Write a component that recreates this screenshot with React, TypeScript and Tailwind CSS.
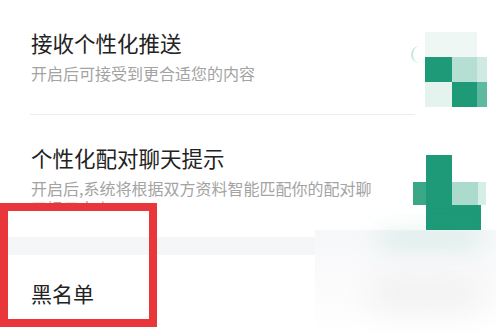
import React from "react";

const cjk = { fontFamily: '"Noto Sans CJK SC", "Noto Sans", sans-serif' };

const G = "#1f9a78";

// Pixel mosaic that hides the toggle switch in the screenshot.
function SwitchMosaic1() {
  return (
    <div className="flex items-start">
      <div className="mt-[14px] mr-[4px] w-[10px] h-[17px] rounded-l-full border-l-2 border-[#c6e6dc]" />
      <div className="grid grid-cols-[27px_25px_10px] grid-rows-[25px_25px_25px]">
        <div className="col-span-2 bg-[#eef7f4]" />
        <div />
        <div style={{ background: G }} />
        <div className="bg-[#b6dfd3]" />
        <div className="bg-[#cfeae2]" />
        <div className="bg-[#e4f3ee]" />
        <div style={{ background: G }} />
        <div className="bg-[#5fb99f]" />
      </div>
    </div>
  );
}

function SwitchMosaic2() {
  return (
    <div className="grid grid-cols-[13px_26px_26px_8px] grid-rows-[27px_23px_25px]">
      <div />
      <div style={{ background: G }} />
      <div />
      <div />
      <div className="bg-[#3aa887]" />
      <div style={{ background: G }} />
      <div className="bg-[#acdacc]" />
      <div className="bg-[#d6eee7]" />
      <div />
      <div className="col-span-3 mr-[5px]" style={{ background: G }} />
    </div>
  );
}

export default function App() {
  return (
    <div className="relative w-[496px] h-[335px] bg-white overflow-hidden" style={cjk}>
      {/* item 1 */}
      <div className="flex items-start pl-[31px]">
        <div className="flex-1 pt-[28px]">
          <div className="text-[21.5px] leading-[30px] text-[#222]">接收个性化推送</div>
          <div className="mt-[4px] text-[16px] leading-[22px] text-[#a3a3a3]">开启后可接受到更合适您的内容</div>
        </div>
        <div className="pt-[32px] mr-[9px]">
          <SwitchMosaic1 />
        </div>
      </div>
      <div className="ml-[30px] mr-[81px] mt-[7px] h-px bg-[#ececec]" />

      {/* item 2 */}
      <div className="flex items-start pl-[31px]">
        <div className="flex-1 pt-[28px]">
          <div className="text-[21.5px] leading-[30px] text-[#222]">个性化配对聊天提示</div>
          <div className="mt-[5px] w-[350px] h-[31px] overflow-hidden text-[16px] leading-[20px] text-[#a3a3a3]">
            开启后,系统将根据双方资料智能匹配你的配对聊天提示文案
          </div>
        </div>
        <div className="pt-[40px] mr-[10px]">
          <SwitchMosaic2 />
        </div>
      </div>
      <div className="h-[7px]" />
      <div className="h-[18px] bg-[#f5f6f8]" />

      {/* blacklist */}
      <div className="pl-[31px] pt-[23px]">
        <div className="text-[21px] leading-[30px] text-[#222]">黑名单</div>
      </div>

      {/* blurred patch over the bottom right */}
      <div className="absolute left-[315px] top-[230px] w-[181px] h-[105px] bg-gradient-to-b from-[#f6f7f9] via-[#fbfbfc] to-white" />
      <div className="absolute left-[380px] top-[234px] w-[100px] h-[12px] bg-[#1f9a78]/20 blur-md" />
      <div className="absolute left-[370px] top-[280px] w-[110px] h-[28px] rounded-full bg-[#eeeeef] blur-lg" />

      {/* red highlight box */}
      <div className="absolute left-0 top-[203px] w-[157px] h-[124px] border-[8px] border-[#e9363a]" />
    </div>
  );
}
